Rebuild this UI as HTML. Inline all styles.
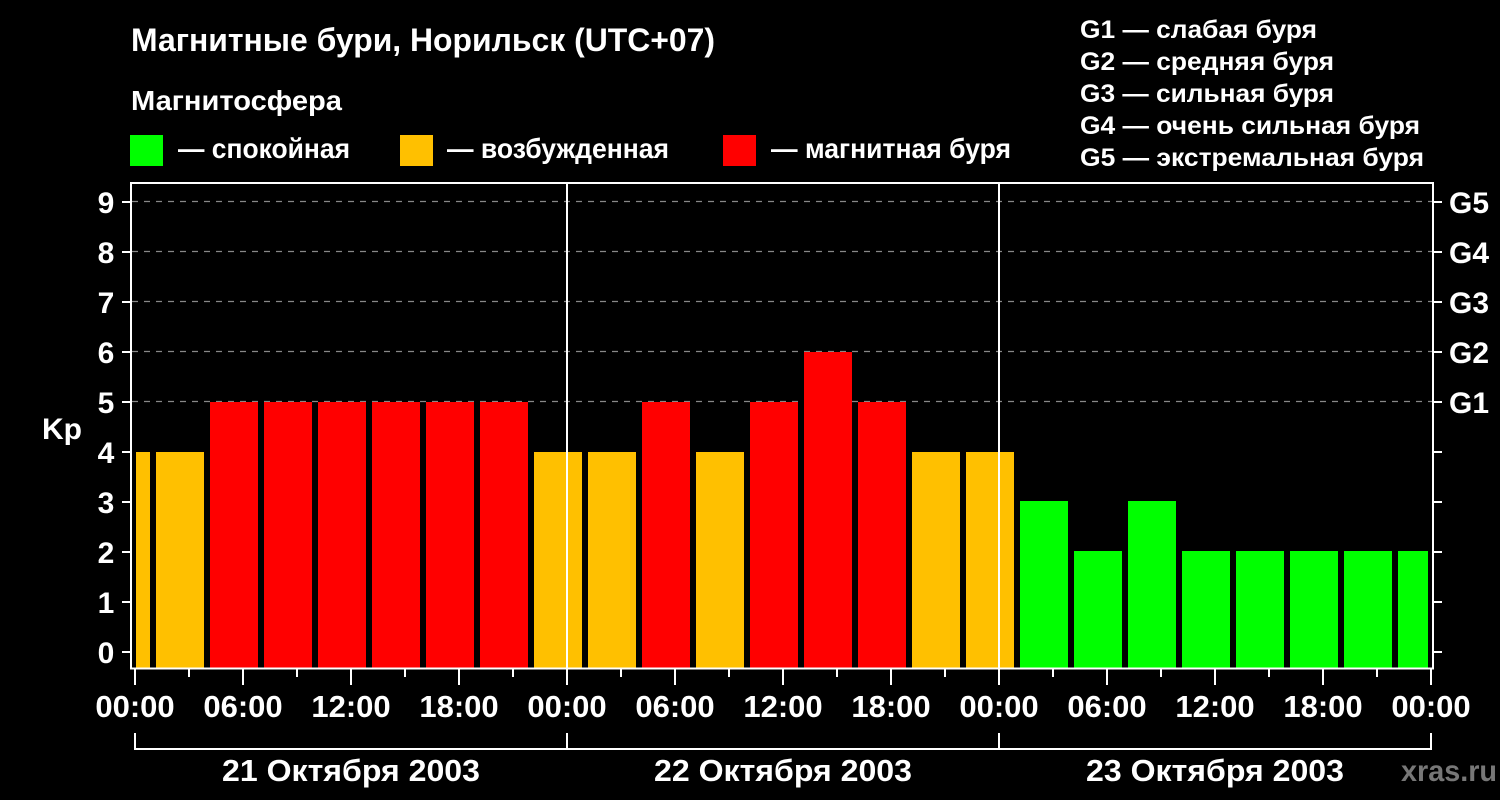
<!DOCTYPE html>
<html><head><meta charset="utf-8"><style>
html,body{margin:0;padding:0;background:#000;}
svg{display:block;}
text{font-family:"Liberation Sans",sans-serif;font-weight:bold;fill:#fff;}
</style></head><body>
<svg width="1500" height="800" xmlns="http://www.w3.org/2000/svg">
<rect width="1500" height="800" fill="#000"/>
<text x="131" y="51" font-size="32" textLength="584" lengthAdjust="spacingAndGlyphs">Магнитные бури, Норильск (UTC+07)</text>
<text x="131" y="110" font-size="28" textLength="211" lengthAdjust="spacingAndGlyphs">Магнитосфера</text>
<rect x="130" y="135" width="33" height="31" fill="#00ff00"/>
<text x="178" y="158" font-size="28" textLength="172" lengthAdjust="spacingAndGlyphs">— спокойная</text>
<rect x="400" y="135" width="33" height="31" fill="#ffc000"/>
<text x="447" y="158" font-size="28" textLength="222" lengthAdjust="spacingAndGlyphs">— возбужденная</text>
<rect x="723" y="135" width="33" height="31" fill="#ff0000"/>
<text x="771" y="158" font-size="28" textLength="240" lengthAdjust="spacingAndGlyphs">— магнитная буря</text>
<g font-size="25">
<text x="1080" y="38" textLength="237" lengthAdjust="spacingAndGlyphs">G1 — слабая буря</text>
<text x="1080" y="70" textLength="254" lengthAdjust="spacingAndGlyphs">G2 — средняя буря</text>
<text x="1080" y="102" textLength="254" lengthAdjust="spacingAndGlyphs">G3 — сильная буря</text>
<text x="1080" y="134" textLength="340" lengthAdjust="spacingAndGlyphs">G4 — очень сильная буря</text>
<text x="1080" y="166" textLength="344" lengthAdjust="spacingAndGlyphs">G5 — экстремальная буря</text>
</g>
<g stroke="#888" stroke-width="1.3" stroke-dasharray="6,6">
<line x1="132" y1="201.5" x2="1432" y2="201.5"/>
<line x1="132" y1="251.5" x2="1432" y2="251.5"/>
<line x1="132" y1="301.5" x2="1432" y2="301.5"/>
<line x1="132" y1="351.5" x2="1432" y2="351.5"/>
<line x1="132" y1="401.5" x2="1432" y2="401.5"/>
</g>
<g>
<rect x="136" y="452" width="14" height="216" fill="#ffc000"/>
<rect x="156" y="452" width="48" height="216" fill="#ffc000"/>
<rect x="210" y="402" width="48" height="266" fill="#ff0000"/>
<rect x="264" y="402" width="48" height="266" fill="#ff0000"/>
<rect x="318" y="402" width="48" height="266" fill="#ff0000"/>
<rect x="372" y="402" width="48" height="266" fill="#ff0000"/>
<rect x="426" y="402" width="48" height="266" fill="#ff0000"/>
<rect x="480" y="402" width="48" height="266" fill="#ff0000"/>
<rect x="534" y="452" width="48" height="216" fill="#ffc000"/>
<rect x="588" y="452" width="48" height="216" fill="#ffc000"/>
<rect x="642" y="402" width="48" height="266" fill="#ff0000"/>
<rect x="696" y="452" width="48" height="216" fill="#ffc000"/>
<rect x="750" y="402" width="48" height="266" fill="#ff0000"/>
<rect x="804" y="352" width="48" height="316" fill="#ff0000"/>
<rect x="858" y="402" width="48" height="266" fill="#ff0000"/>
<rect x="912" y="452" width="48" height="216" fill="#ffc000"/>
<rect x="966" y="452" width="48" height="216" fill="#ffc000"/>
<rect x="1020" y="501" width="48" height="167" fill="#00ff00"/>
<rect x="1074" y="551" width="48" height="117" fill="#00ff00"/>
<rect x="1128" y="501" width="48" height="167" fill="#00ff00"/>
<rect x="1182" y="551" width="48" height="117" fill="#00ff00"/>
<rect x="1236" y="551" width="48" height="117" fill="#00ff00"/>
<rect x="1290" y="551" width="48" height="117" fill="#00ff00"/>
<rect x="1344" y="551" width="48" height="117" fill="#00ff00"/>
<rect x="1398" y="551" width="30" height="117" fill="#00ff00"/>
</g>
<g stroke="#fff" stroke-width="2">
<line x1="567" y1="183" x2="567" y2="668"/>
<line x1="999" y1="183" x2="999" y2="668"/>
</g>
<rect x="131" y="183" width="1302" height="485.5" fill="none" stroke="#fff" stroke-width="2"/>
<g stroke="#fff" stroke-width="2">
<line x1="122" y1="652" x2="131" y2="652"/><line x1="122" y1="602" x2="131" y2="602"/>
<line x1="122" y1="552" x2="131" y2="552"/><line x1="122" y1="502" x2="131" y2="502"/>
<line x1="122" y1="452" x2="131" y2="452"/><line x1="122" y1="402" x2="131" y2="402"/>
<line x1="122" y1="352" x2="131" y2="352"/><line x1="122" y1="302" x2="131" y2="302"/>
<line x1="122" y1="252" x2="131" y2="252"/><line x1="122" y1="202" x2="131" y2="202"/>
<line x1="1433" y1="652" x2="1442" y2="652"/><line x1="1433" y1="602" x2="1442" y2="602"/>
<line x1="1433" y1="552" x2="1442" y2="552"/><line x1="1433" y1="502" x2="1442" y2="502"/>
<line x1="1433" y1="452" x2="1442" y2="452"/><line x1="1433" y1="402" x2="1442" y2="402"/>
<line x1="1433" y1="352" x2="1442" y2="352"/><line x1="1433" y1="302" x2="1442" y2="302"/>
<line x1="1433" y1="252" x2="1442" y2="252"/><line x1="1433" y1="202" x2="1442" y2="202"/>
</g>
<g font-size="30" text-anchor="middle">
<text x="106" y="663">0</text><text x="106" y="613">1</text><text x="106" y="563">2</text>
<text x="106" y="513">3</text><text x="106" y="463">4</text><text x="106" y="413">5</text>
<text x="106" y="363">6</text><text x="106" y="313">7</text><text x="106" y="263">8</text>
<text x="106" y="213">9</text>
</g>
<g font-size="30">
<text x="1449" y="413">G1</text><text x="1449" y="363">G2</text><text x="1449" y="313">G3</text>
<text x="1449" y="263">G4</text><text x="1449" y="213">G5</text>
</g>
<text x="42" y="439" font-size="30">Kp</text>
<g stroke="#fff" stroke-width="2">
<line x1="135" y1="669" x2="135" y2="685"/><line x1="189" y1="669" x2="189" y2="677"/>
<line x1="243" y1="669" x2="243" y2="685"/><line x1="297" y1="669" x2="297" y2="677"/>
<line x1="351" y1="669" x2="351" y2="685"/><line x1="405" y1="669" x2="405" y2="677"/>
<line x1="459" y1="669" x2="459" y2="685"/><line x1="513" y1="669" x2="513" y2="677"/>
<line x1="567" y1="669" x2="567" y2="685"/><line x1="621" y1="669" x2="621" y2="677"/>
<line x1="675" y1="669" x2="675" y2="685"/><line x1="729" y1="669" x2="729" y2="677"/>
<line x1="783" y1="669" x2="783" y2="685"/><line x1="837" y1="669" x2="837" y2="677"/>
<line x1="891" y1="669" x2="891" y2="685"/><line x1="945" y1="669" x2="945" y2="677"/>
<line x1="999" y1="669" x2="999" y2="685"/><line x1="1053" y1="669" x2="1053" y2="677"/>
<line x1="1107" y1="669" x2="1107" y2="685"/><line x1="1161" y1="669" x2="1161" y2="677"/>
<line x1="1215" y1="669" x2="1215" y2="685"/><line x1="1269" y1="669" x2="1269" y2="677"/>
<line x1="1323" y1="669" x2="1323" y2="685"/><line x1="1377" y1="669" x2="1377" y2="677"/>
<line x1="1431" y1="669" x2="1431" y2="685"/>
</g>
<g font-size="31" text-anchor="middle">
<text x="135" y="717">00:00</text><text x="243" y="717">06:00</text><text x="351" y="717">12:00</text>
<text x="459" y="717">18:00</text><text x="567" y="717">00:00</text><text x="675" y="717">06:00</text>
<text x="783" y="717">12:00</text><text x="891" y="717">18:00</text><text x="999" y="717">00:00</text>
<text x="1107" y="717">06:00</text><text x="1215" y="717">12:00</text><text x="1323" y="717">18:00</text>
<text x="1431" y="717">00:00</text>
</g>
<g stroke="#fff" stroke-width="2" fill="none">
<polyline points="135,733 135,749 1431,749 1431,733"/>
<line x1="567" y1="733" x2="567" y2="749"/><line x1="999" y1="733" x2="999" y2="749"/>
</g>
<g font-size="31" text-anchor="middle">
<text x="351" y="781" textLength="258" lengthAdjust="spacingAndGlyphs">21 Октября 2003</text>
<text x="783" y="781" textLength="258" lengthAdjust="spacingAndGlyphs">22 Октября 2003</text>
<text x="1215" y="781" textLength="258" lengthAdjust="spacingAndGlyphs">23 Октября 2003</text>
</g>
<text x="1401" y="781" font-size="30" style="fill:#777" textLength="96" lengthAdjust="spacingAndGlyphs">xras.ru</text>
</svg>
</body></html>
